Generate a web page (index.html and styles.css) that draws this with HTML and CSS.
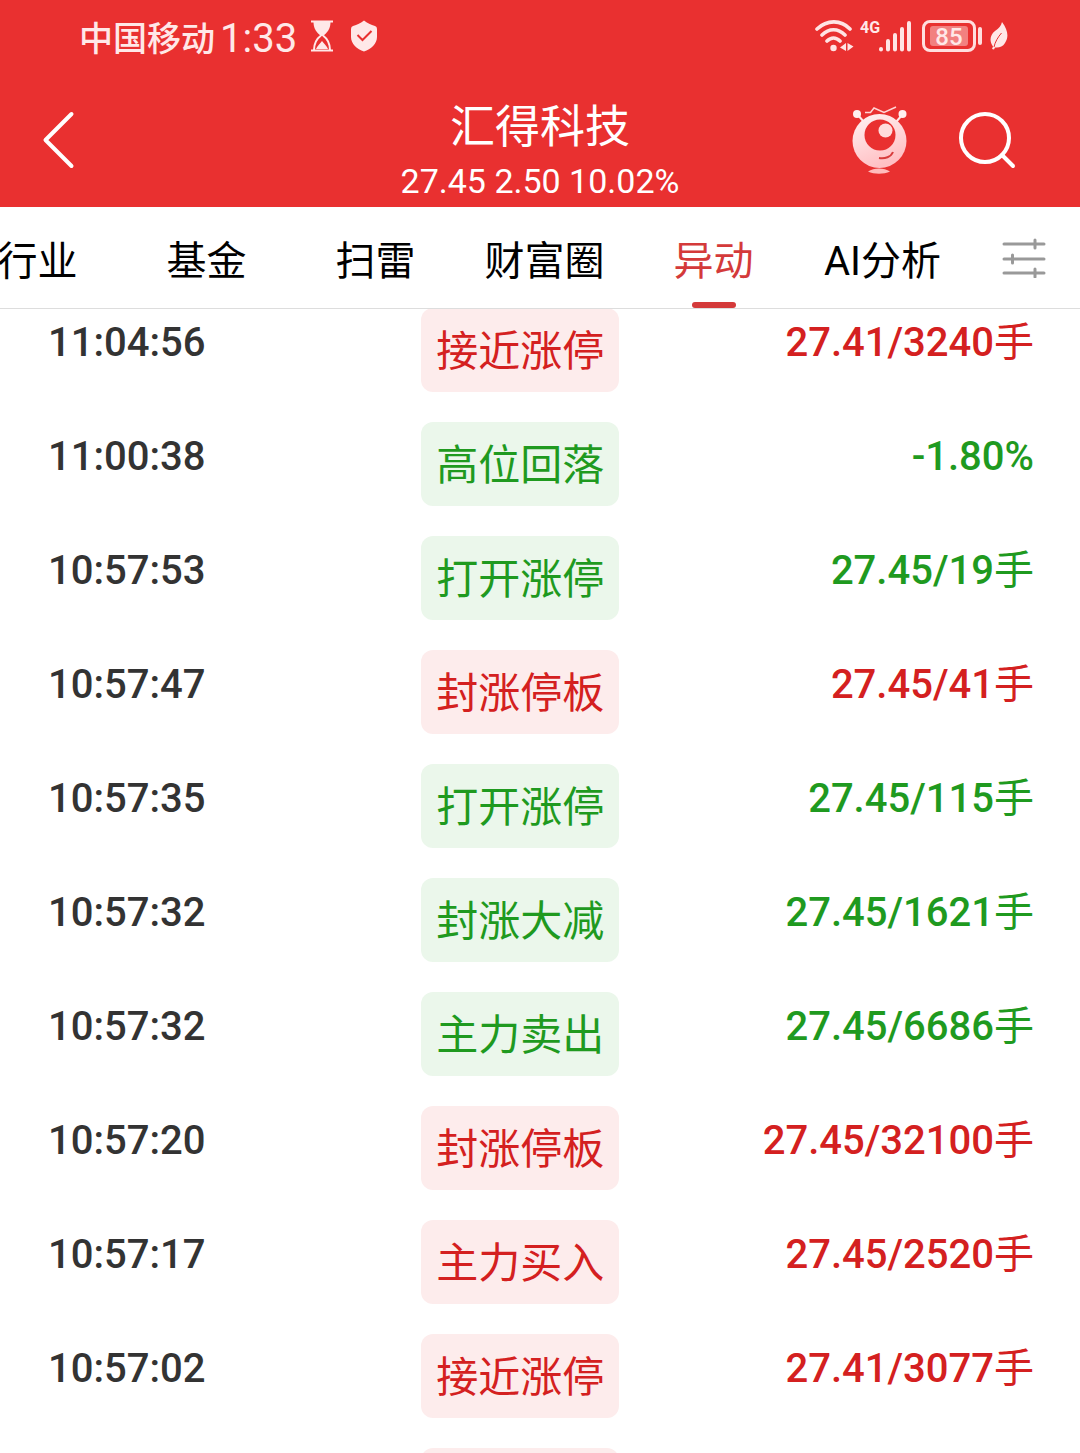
FILE: index.html
```html
<!DOCTYPE html>
<html lang="zh-CN">
<head>
<meta charset="utf-8">
<meta name="viewport" content="width=device-width, initial-scale=1">
<title>汇得科技</title>
<link rel="stylesheet" href="styles.css">
</head>
<body>
<header class="top">
  <div class="status">
    <span class="carrier">中国移动</span>
    <span class="clock">1:33</span>
    <svg class="hourglass" width="24" height="32" viewBox="0 0 24 32" fill="none" stroke="#ffe8e8">
      <path d="M1 1.500H23M1 30.500H23" stroke-width="2"/>
      <path d="M3.500 2H20.500C20.500 9 17 13 13 16H11C7 13 3.500 9 3.500 2Z" fill="#ffe8e8" stroke="none"/>
      <path d="M11 15.500C7 18.500 4 22 4 30M13 15.500C17 18.500 20 22 20 30" stroke-width="2"/>
      <path d="M6 29C7 26 10 24 12 21C14 24 17 26 18 29Z" fill="#ffe8e8" stroke="none"/>
    </svg>
    <svg class="shield" width="26" height="32" viewBox="0 0 26 32" fill="none">
      <path d="M13 .5C16 3 20 5 24 6Q26 6.500 26 9V17C26 24 20 29 13 31.500C6 29 0 24 0 17V9Q0 6.500 2 6C6 5 10 3 13 .5Z" fill="#ffe8e8"/>
      <path d="M6.500 15L11.500 20L20.500 11" stroke="#e93030" stroke-width="2"/>
    </svg>
    <span class="signals">
      <svg width="40" height="34" viewBox="0 0 40 34" fill="none" stroke="#ffe4e4" stroke-linecap="round">
        <path d="M2 10C12 .5 26 .5 35 10M7 16C14 9 23 9 30 16M12 22C16 18 21 18 25 22" stroke-width="3.600"/>
        <circle cx="18.500" cy="29" r="3.200" fill="#ffe4e4" stroke="none"/>
        <path d="M31 24V32L25 28.500ZM32.500 24V32L38.500 27.500Z" fill="#ffe4e4" stroke="none"/>
      </svg>
      <span class="network">4G</span>
      <svg width="34" height="34" viewBox="0 0 34 34" stroke="#ffe4e4" stroke-width="4" stroke-linecap="round">
        <path d="M3 30V30.500M10 22V30.500M17 16V30.500M24 10V30.500M31 4V30.500"/>
      </svg>
      <span class="battery"><span class="charge">85</span></span>
      <span class="battery-tip"></span>
      <svg class="leaf" width="18" height="28" viewBox="0 0 18 28" fill="#ffe8e8">
        <path d="M12 0C18 8 19 15 15 21C12.500 25 9 26 5 25.500L4 27.500L2 27L3 24.500C-1 19 0 13 5 9C9 6 11 4 12 0Z"/>
        <path d="M4 25C5 20 8 15 11.500 11" fill="none" stroke="#e93030" stroke-width="1"/>
      </svg>
    </span>
  </div>
  <div class="titlebar">
    <button class="icon-btn back" aria-label="返回">
      <svg width="34" height="58" viewBox="0 0 34 58" fill="none" stroke="#fff" stroke-width="4" stroke-linecap="round" stroke-linejoin="round"><path d="M29.500 3L3.500 29L29.500 55"/></svg>
    </button>
    <div class="heading">
      <h1 class="name">汇得科技</h1>
      <p class="quote">27.45 2.50 10.02%</p>
    </div>
    <div class="actions">
      <button class="icon-btn" aria-label="助手">
        <svg width="56" height="70" viewBox="0 0 56 70" fill="none">
          <defs>
            <linearGradient id="body" x1="0" y1="0" x2="0.400" y2="1"><stop offset="0" stop-color="#fff4f4"/><stop offset="1" stop-color="#ffc0c4"/></linearGradient>
          </defs>
          <path d="M5 9L12 17M51 9L44 17" stroke="#ffe8e8" stroke-width="2"/>
          <circle cx="5" cy="9" r="4" fill="#fff0f0"/><circle cx="50.500" cy="9" r="4" fill="#fff0f0"/>
          <path d="M13 7.500H18.500L22 3L32 7.500L44 2" stroke="#ffd5d5" stroke-width="1.500"/>
          <circle cx="27.500" cy="36" r="27" fill="url(#body)"/>
          <circle cx="28" cy="30" r="15.500" fill="#e93030"/>
          <circle cx="33.500" cy="25.500" r="7" fill="#ffdcdc"/>
          <path d="M27 53C33 54 39 52 41 47" stroke="#d83c3c" stroke-width="2"/>
          <path d="M16 66.500C22 62.500 32 62.500 38 66.500C32 69.500 22 69.500 16 66.500Z" fill="#ffbcbc"/>
        </svg>
      </button>
      <button class="icon-btn" aria-label="搜索">
        <svg width="58" height="58" viewBox="0 0 58 58" fill="none" stroke="#fff" stroke-width="4" stroke-linecap="round"><circle cx="27" cy="27" r="24"/><path d="M44 44L55 55"/></svg>
      </button>
    </div>
  </div>
</header>

<nav class="tabs">
  <div class="scroller">
    <a class="tab" href="#">行业</a>
    <a class="tab" href="#">基金</a>
    <a class="tab" href="#">扫雷</a>
    <a class="tab" href="#">财富圈</a>
    <a class="tab active" href="#" aria-current="page">异动</a>
    <a class="tab" href="#">AI分析</a>
  </div>
  <button class="icon-btn filter" aria-label="设置">
    <svg width="44" height="40" viewBox="0 0 44 40" fill="none" stroke="#999" stroke-width="3" stroke-linecap="round"><path d="M2 6H42M2 21H42M2 35H42M33 2V10M10.500 17V25M33 31V39"/></svg>
  </button>
</nav>

<main class="list">
  <table class="events">
    <colgroup><col class="col-time"><col class="col-kind"><col></colgroup>
    <tbody>
      <tr class="up"><td class="time">11:04:56</td><td><span class="badge">接近涨停</span></td><td class="value">27.41/3240<span class="unit">手</span></td></tr>
      <tr class="down"><td class="time">11:00:38</td><td><span class="badge">高位回落</span></td><td class="value">-1.80%</td></tr>
      <tr class="down"><td class="time">10:57:53</td><td><span class="badge">打开涨停</span></td><td class="value">27.45/19<span class="unit">手</span></td></tr>
      <tr class="up"><td class="time">10:57:47</td><td><span class="badge">封涨停板</span></td><td class="value">27.45/41<span class="unit">手</span></td></tr>
      <tr class="down"><td class="time">10:57:35</td><td><span class="badge">打开涨停</span></td><td class="value">27.45/115<span class="unit">手</span></td></tr>
      <tr class="down"><td class="time">10:57:32</td><td><span class="badge">封涨大减</span></td><td class="value">27.45/1621<span class="unit">手</span></td></tr>
      <tr class="down"><td class="time">10:57:32</td><td><span class="badge">主力卖出</span></td><td class="value">27.45/6686<span class="unit">手</span></td></tr>
      <tr class="up"><td class="time">10:57:20</td><td><span class="badge">封涨停板</span></td><td class="value">27.45/32100<span class="unit">手</span></td></tr>
      <tr class="up"><td class="time">10:57:17</td><td><span class="badge">主力买入</span></td><td class="value">27.45/2520<span class="unit">手</span></td></tr>
      <tr class="up"><td class="time">10:57:02</td><td><span class="badge">接近涨停</span></td><td class="value">27.41/3077<span class="unit">手</span></td></tr>
      <tr class="up"><td class="time"></td><td><span class="badge"></span></td><td class="value"></td></tr>
    </tbody>
  </table>
</main>
</body>
</html>
```

FILE: styles.css
```css
* { box-sizing: border-box; }

body {
  margin: 0;
  height: 100vh;
  display: flex;
  flex-direction: column;
  overflow: hidden;
  background: #fff;
  color: #000;
  font-family: Roboto, "Noto Sans CJK SC", sans-serif;
}

svg { display: block; flex: none; }

.icon-btn {
  padding: 0;
  border: 0;
  background: none;
}

/* Header */
.top {
  flex: none;
  background: #e93030;
  color: #fff;
}

.status {
  display: flex;
  align-items: center;
  height: 72px;
  padding: 0 72px 0 79px;
  color: #ffe8e8;
  line-height: 40px;
}

.carrier,
.clock { padding-top: 5px; }

.carrier { font-size: 34px; font-weight: 500; }

.clock {
  margin-left: 5px;
  font-size: 40px;
}

.hourglass { margin-left: 13px; }
.shield { margin-left: 17px; }

.signals {
  display: flex;
  align-items: center;
  margin-left: auto;
}

.network {
  align-self: flex-start;
  width: 18px;
  margin-left: 5px;
  font: 700 16px/18px Roboto, sans-serif;
}

.battery {
  width: 54px;
  height: 32px;
  margin-left: 10px;
  padding: 3px;
  border: 3px solid #ffdede;
  border-radius: 8px;
}

.charge {
  display: block;
  width: 38px;
  height: 20px;
  margin: 0 auto;
  border-radius: 3px;
  background: #f28080;
  text-align: center;
  font: 500 24px/22px Roboto, sans-serif;
}

.battery-tip {
  width: 4px;
  height: 18px;
  margin-left: 2px;
  border-radius: 2px;
  background: #ffdede;
}

.leaf { margin-left: 8px; }

.titlebar {
  display: grid;
  grid-template-columns: 1fr auto 1fr;
  align-items: center;
  height: 135px;
  padding: 0 64px 0 42px;
}

.back { justify-self: start; }

.heading {
  padding: 22px 0 0 22px;
  text-align: center;
}

.name {
  margin: 0;
  font-size: 45px;
  font-weight: 400;
  line-height: 60px;
}

.quote {
  margin: 0;
  font-size: 34px;
  line-height: 46px;
}

.actions {
  display: flex;
  align-items: center;
  justify-self: end;
  gap: 50px;
}

/* Tabs */
.tabs {
  position: relative;
  display: flex;
  flex: none;
  height: 101px;
  box-shadow: 0 1px 0 #ddd;
}

.scroller {
  display: flex;
  flex: 1;
  justify-content: flex-end;
  min-width: 0;
  overflow: hidden;
}

.tab {
  display: flex;
  flex: 0 0 169px;
  flex-direction: column;
  align-items: center;
  color: #000;
  font-size: 40px;
  line-height: 110px;
  text-decoration: none;
}

.active { position: relative; color: #d43a3a; }

.active::after {
  content: "";
  position: absolute;
  bottom: 0;
  width: 44px;
  height: 6px;
  border-radius: 3px;
  background: #d43a3a;
}

.filter {
  display: flex;
  align-items: center;
  justify-content: center;
  width: 113px;
}

/* Event list */
.list {
  flex: 1;
  min-height: 0;
  overflow: hidden;
}

.events {
  width: 100%;
  table-layout: fixed;
  border-collapse: collapse;
}

.col-time { width: 39%; }
.col-kind { width: 198px; }

.events td {
  height: 114px;
  padding: 0;
  vertical-align: top;
}

.events .time,
.events .value {
  font-size: 40px;
  font-weight: 500;
  line-height: 70px;
  white-space: nowrap;
}

.events .time { padding-left: 48px; color: #333; }
.events .value { padding-right: 46px; text-align: right; }

.unit { font-weight: 400; }

.badge {
  display: block;
  height: 84px;
  border-radius: 12px;
  font-size: 42px;
  line-height: 88px;
  text-align: center;
}

.up { color: #d42020; }
.up .badge { background: #fdecec; }
.down { color: #1f9a1f; }
.down .badge { background: #ebf7eb; }
```
